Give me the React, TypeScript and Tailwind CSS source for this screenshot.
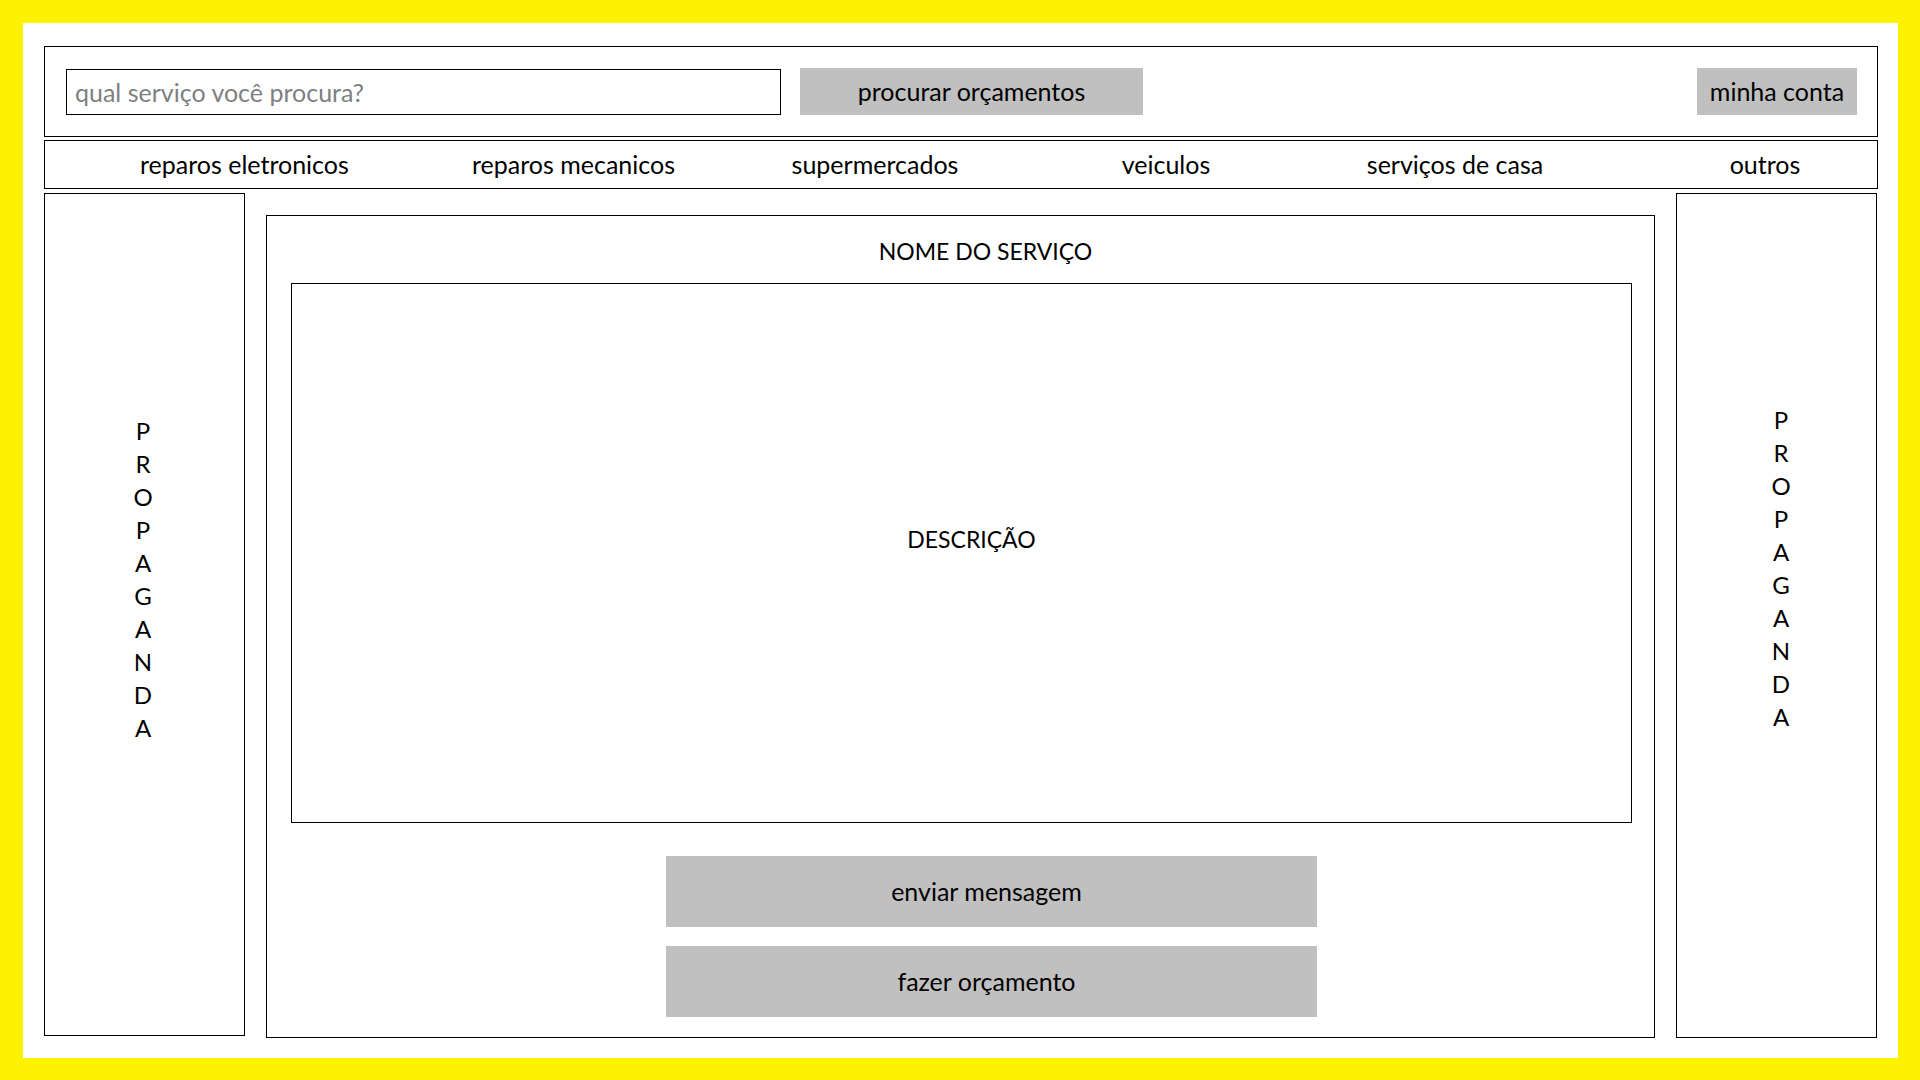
import React from 'react';

const navItems = [
  { label: 'reparos eletronicos', ml: 'ml-[95px]' },
  { label: 'reparos mecanicos', ml: 'ml-[132px]' },
  { label: 'supermercados', ml: 'ml-[103px]' },
  { label: 'veiculos', ml: 'ml-[91px]' },
  { label: 'serviços de casa', ml: 'ml-[89px]' },
  { label: 'outros', ml: 'ml-[110px]' },
];

const letters = 'PROPAGANDA'.split('');

// Vertical ad banner, one letter per line
const AdColumn = ({ className }: { className: string }) => (
  <aside className={`w-[201px] shrink-0 border border-black flex flex-col items-center text-[24px] leading-[33px] ${className}`}>
    {letters.map((l, i) => (
      <span key={i}>{l}</span>
    ))}
  </aside>
);

const App = () => {
  return (
    <div
      className="w-[1920px] h-[1080px] bg-[#fff200] pl-[23px] pt-[23px] pr-[22px] pb-[22px] text-black text-[25px]"
      style={{ fontFamily: 'Lato, "Open Sans", sans-serif' }}
    >
      <div className="w-full h-full bg-white pl-[21px] pr-[20px] pt-[23px] flex flex-col">
        {/* top bar */}
        <header className="h-[91px] border border-black flex items-center pl-[21px] pr-[20px]">
          <input
            type="text"
            placeholder="qual serviço você procura?"
            className="w-[715px] h-[46px] border border-black px-[8px] text-[25px] outline-none placeholder:text-[#7f7f7f]"
          />
          <button className="ml-[19px] w-[343px] h-[47px] bg-[#c0c0c0]">procurar orçamentos</button>
          <button className="ml-auto w-[160px] h-[47px] bg-[#c0c0c0]">minha conta</button>
        </header>

        {/* categories */}
        <nav className="mt-[3px] h-[49px] border border-black flex items-center">
          {navItems.map((item) => (
            <a key={item.label} href="#" className={`w-[200px] shrink-0 text-center whitespace-nowrap ${item.ml}`}>
              {item.label}
            </a>
          ))}
        </nav>

        {/* content */}
        <div className="mt-[4px] flex items-start">
          <AdColumn className="h-[843px] pt-[220px] pr-[3px]" />

          <main className="ml-[21px] mt-[22px] w-[1389px] h-[823px] border border-black flex flex-col pl-[24px] pr-[22px]">
            <h2 className="h-[67px] flex items-center justify-center pl-[48px] pt-[3px] text-[23px]">NOME DO SERVIÇO</h2>
            <div className="h-[540px] border border-black flex items-center justify-center pl-[20px] pb-[27px] text-[23px]">
              DESCRIÇÃO
            </div>
            <div className="flex flex-col gap-[19px] pt-[33px] pl-[375px]">
              <button className="w-[651px] h-[71px] bg-[#c0c0c0] pr-[10px]">enviar mensagem</button>
              <button className="w-[651px] h-[71px] bg-[#c0c0c0] pr-[10px]">fazer orçamento</button>
            </div>
          </main>

          <AdColumn className="ml-[21px] h-[845px] pt-[209px] pl-[9px]" />
        </div>
      </div>
    </div>
  );
};

export default App;
